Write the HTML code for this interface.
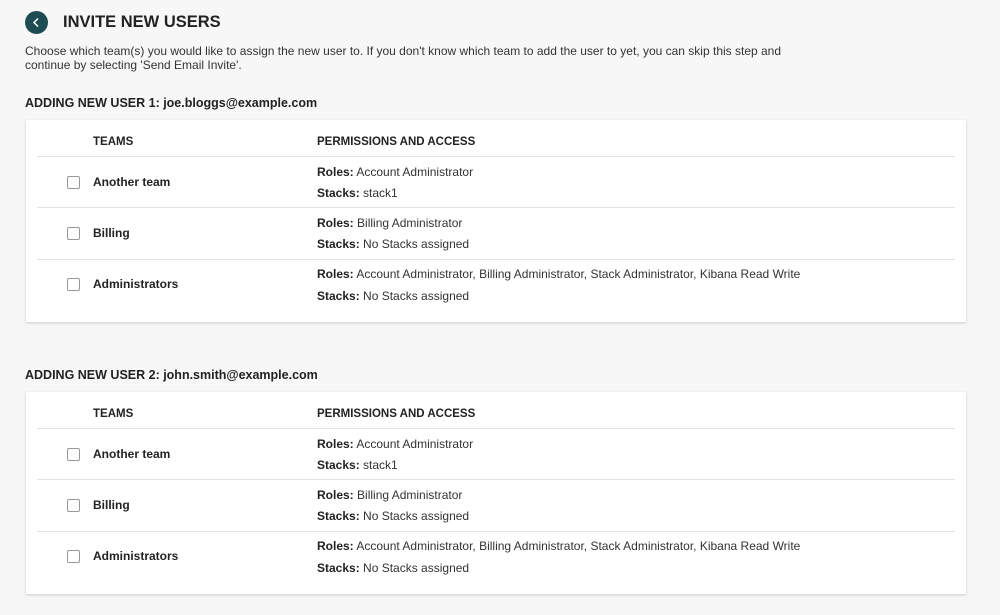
<!DOCTYPE html>
<html><head><style>
body{margin:0;width:1000px;height:615px;background:#f7f7f7;font-family:"Liberation Sans",sans-serif;color:#222;position:relative;overflow:hidden}
.a{position:absolute;white-space:nowrap}
.circ{position:absolute;left:25px;top:11px;width:23px;height:23px;border-radius:50%;background:#1d4d52}
h1{position:absolute;left:63px;top:13px;margin:0;font-size:16.5px;font-weight:bold;color:#222}
.desc{position:absolute;left:25px;top:44px;font-size:12px;line-height:14px;color:#333;width:800px}
.ut{position:absolute;left:25px;font-size:12.5px;font-weight:bold}
.card{position:absolute;left:26px;width:940px;height:202px;background:#fff;box-shadow:0 1px 3px rgba(0,0,0,.18)}
.hd{position:absolute;top:16px;font-size:11.5px;font-weight:bold}
.line{position:absolute;left:11px;right:11px;height:1px;background:#e4e4e4}
.cb{position:absolute;left:41px;width:11px;height:11px;border:1px solid #999;border-radius:2px;background:#fff}
.tn{position:absolute;left:67px;font-size:12px;font-weight:bold}
.p{position:absolute;left:291px;font-size:12px;color:#333}
.p b{color:#222}
</style></head><body>
<div class="circ"><svg width="23" height="23"><path d="M13 7.5 L9 11.5 L13 15.5" stroke="#fff" stroke-width="1.5" fill="none"/></svg></div>
<h1>INVITE NEW USERS</h1>
<div class="desc">Choose which team(s) you would like to assign the new user to. If you don't know which team to add the user to yet, you can skip this step and<br>continue by selecting 'Send Email Invite'.</div>

<div class="ut" style="top:96px">ADDING NEW USER 1: joe.bloggs@example.com</div>
<div class="card" style="top:120px">
<div class="hd" style="left:67px">TEAMS</div><div class="hd" style="left:291px">PERMISSIONS AND ACCESS</div>
<div class="line" style="top:36px"></div>
<div class="cb" style="top:56px"></div><div class="tn a" style="top:55px">Another team</div>
<div class="p a" style="top:45px"><b>Roles:</b> Account Administrator</div>
<div class="p a" style="top:66px"><b>Stacks:</b> stack1</div>
<div class="line" style="top:87px"></div>
<div class="cb" style="top:107px"></div><div class="tn a" style="top:106px">Billing</div>
<div class="p a" style="top:96px"><b>Roles:</b> Billing Administrator</div>
<div class="p a" style="top:117px"><b>Stacks:</b> No Stacks assigned</div>
<div class="line" style="top:139px"></div>
<div class="cb" style="top:158px"></div><div class="tn a" style="top:157px">Administrators</div>
<div class="p a" style="top:147px"><b>Roles:</b> Account Administrator, Billing Administrator, Stack Administrator, Kibana Read Write</div>
<div class="p a" style="top:169px"><b>Stacks:</b> No Stacks assigned</div>
</div>

<div class="ut" style="top:368px">ADDING NEW USER 2: john.smith@example.com</div>
<div class="card" style="top:392px">
<div class="hd" style="left:67px">TEAMS</div><div class="hd" style="left:291px">PERMISSIONS AND ACCESS</div>
<div class="line" style="top:36px"></div>
<div class="cb" style="top:56px"></div><div class="tn a" style="top:55px">Another team</div>
<div class="p a" style="top:45px"><b>Roles:</b> Account Administrator</div>
<div class="p a" style="top:66px"><b>Stacks:</b> stack1</div>
<div class="line" style="top:87px"></div>
<div class="cb" style="top:107px"></div><div class="tn a" style="top:106px">Billing</div>
<div class="p a" style="top:96px"><b>Roles:</b> Billing Administrator</div>
<div class="p a" style="top:117px"><b>Stacks:</b> No Stacks assigned</div>
<div class="line" style="top:139px"></div>
<div class="cb" style="top:158px"></div><div class="tn a" style="top:157px">Administrators</div>
<div class="p a" style="top:147px"><b>Roles:</b> Account Administrator, Billing Administrator, Stack Administrator, Kibana Read Write</div>
<div class="p a" style="top:169px"><b>Stacks:</b> No Stacks assigned</div>
</div>
</body></html>
